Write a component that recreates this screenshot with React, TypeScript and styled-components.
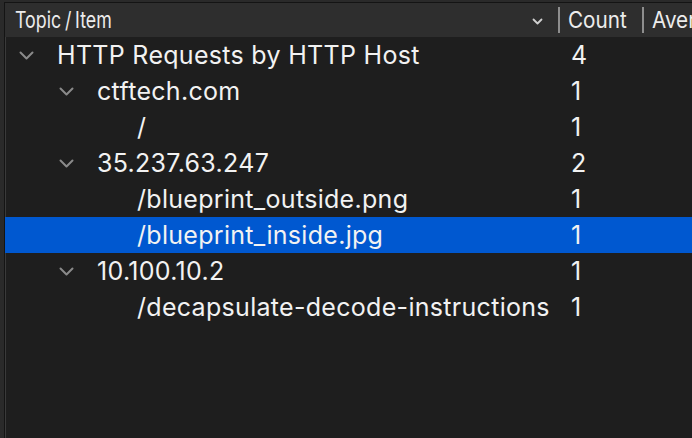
import React from "react";
import styled, { createGlobalStyle } from "styled-components";

const Global = createGlobalStyle`
  html, body { margin: 0; padding: 0; background: #2a2a2a; }
  body { width: 692px; height: 438px; overflow: hidden; }
  #root { height: 438px; }
`;

const Outer = styled.div`
  height: 438px;
  padding: 2px 0 0 4px;
  box-sizing: border-box;
  background: #2a2a2a;
`;

const Frame = styled.div`
  height: 100%;
  border-left: 1px solid #141414;
  border-top: 1px solid #141414;
  box-shadow: inset 1px 0 0 #3a3a3a;
  background: #1e1e1e;
  overflow: hidden;
`;

const Header = styled.div`
  display: grid;
  grid-template-columns: 553px 84px 1fr;
  height: 34px;
  background: #2e2e2e;
  align-items: center;
  font-family: Inter, "Noto Sans", sans-serif;
  font-size: 22.5px;
  line-height: 26px;
  color: #ececec;
  white-space: nowrap;
`;

const HeadCell = styled.div<{ $divider?: boolean; $pad: number }>`
  display: flex;
  align-items: center;
  height: 26px;
  min-width: 0;
  padding-left: ${(p) => p.$pad}px;
  border-left: ${(p) => (p.$divider ? "2px solid #8e8e8e" : "none")};
`;

const HeadText = styled.span<{ $fill?: boolean; $scale: number }>`
  display: inline-block;
  flex: ${(p) => (p.$fill ? 1 : "none")};
  transform: scaleX(${(p) => p.$scale});
  transform-origin: left center;
  word-spacing: -1.5px;
`;

const SortMark = styled.svg`
  width: 11px;
  height: 7px;
  margin-right: 15px;
  margin-top: 2px;
  flex: none;
`;

const Row = styled.div<{ $selected?: boolean }>`
  display: grid;
  grid-template-columns: 556px 1fr;
  height: 36px;
  align-items: center;
  background: ${(p) => (p.$selected ? "#0058d0" : "transparent")};
  font-family: Inter, "Noto Sans", sans-serif;
  font-size: 25px;
  letter-spacing: 0.3px;
  color: #f2f2f2;
  white-space: nowrap;
`;

const TreeCell = styled.div<{ $level: number }>`
  display: flex;
  align-items: center;
  padding-left: ${(p) => 14 + p.$level * 40}px;
  overflow: hidden;
`;

const Disclosure = styled.span`
  display: inline-flex;
  width: 38px;
  flex: none;
  align-items: center;
`;

const CountCell = styled.div`
  padding-left: 10px;
`;

const Chevron = () => (
  <svg width="15" height="9" viewBox="0 0 15 9">
    <path d="M1.5 1.5 L7.5 7.5 L13.5 1.5" stroke="#8a8a8a" strokeWidth="2" fill="none" strokeLinecap="round" strokeLinejoin="round" />
  </svg>
);

type Item = { label: string; count: string; level: number; selected?: boolean };

const items: Item[] = [
  { label: "HTTP Requests by HTTP Host", count: "4", level: 0 },
  { label: "ctftech.com", count: "1", level: 1 },
  { label: "/", count: "1", level: 2 },
  { label: "35.237.63.247", count: "2", level: 1 },
  { label: "/blueprint_outside.png", count: "1", level: 2 },
  { label: "/blueprint_inside.jpg", count: "1", level: 2, selected: true },
  { label: "10.100.10.2", count: "1", level: 1 },
  { label: "/decapsulate-decode-instructions", count: "1", level: 2 },
];

export default function App() {
  return (
    <>
      <Global />
      <Outer>
        <Frame>
          <Header>
            <HeadCell $pad={10}>
              <HeadText $fill $scale={0.79}>Topic / Item</HeadText>
              <SortMark viewBox="0 0 11 7">
                <path d="M1.5 1.5 L5.5 5.5 L9.5 1.5" stroke="#d0d0d0" strokeWidth="1.8" fill="none" strokeLinecap="round" strokeLinejoin="round" />
              </SortMark>
            </HeadCell>
            <HeadCell $divider $pad={8}>
              <HeadText $scale={0.92}>Count</HeadText>
            </HeadCell>
            <HeadCell $divider $pad={8}>
              <HeadText $scale={0.92}>Average</HeadText>
            </HeadCell>
          </Header>
          {items.map((it, i) => (
            <Row key={i} $selected={it.selected}>
              <TreeCell $level={it.level}>
                {it.level < 2 ? (
                  <Disclosure>
                    <Chevron />
                  </Disclosure>
                ) : (
                  <Disclosure />
                )}
                <span>{it.label}</span>
              </TreeCell>
              <CountCell>{it.count}</CountCell>
            </Row>
          ))}
        </Frame>
      </Outer>
    </>
  );
}
